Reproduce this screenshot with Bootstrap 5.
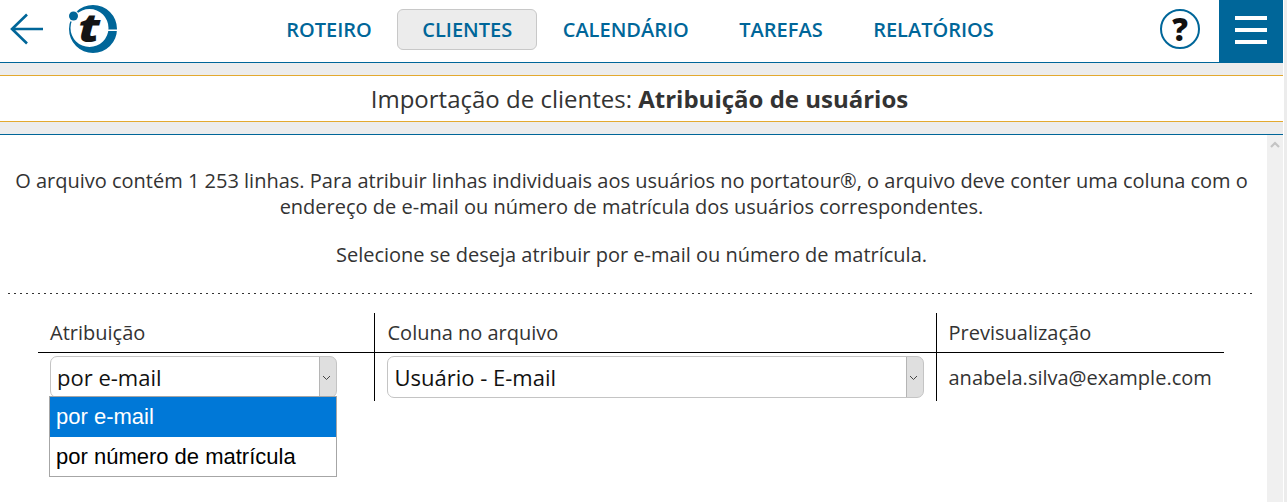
<!DOCTYPE html>
<html lang="pt-BR">
<head>
<meta charset="utf-8">
<title>Importação de clientes</title>
<link href="https://cdn.jsdelivr.net/npm/bootstrap@5.3.0/dist/css/bootstrap.min.css" rel="stylesheet">
<style>
html,body{height:502px;overflow:hidden;background:#fff}
body{font-family:"Open Sans","Noto Sans",sans-serif;font-size:20px;color:#333;line-height:26px}
.app-shell{width:1283px;height:502px;display:flex;flex-direction:column}
.top-bar{height:62px;flex:none;background:#fff}
.back-link{width:38px;margin-left:9px;display:block;line-height:0;margin-top:-4px}
.logo-mark{margin-left:22px;display:block;margin-top:-4px;line-height:0;width:48px;height:48px}
.logo-mark svg{overflow:visible}
.main-nav{flex:1;justify-content:center;padding-left:3px;margin-bottom:3px}
.nav-item-link{display:block;color:#006699;font-weight:600;font-size:20px;line-height:23px;padding:8px 24.250px;border:1px solid transparent;border-radius:6px;text-decoration:none;text-transform:uppercase}
.nav-item-link.is-current{background:#ececec;border-color:#c8c8c8}
.help-btn{width:40px;height:40px;border:2px solid #006699;border-radius:50%;display:flex;align-items:center;justify-content:center;color:#111;font-weight:800;font-size:31px;line-height:1;margin-right:19px;margin-bottom:4px;text-decoration:none}
.menu-btn{width:64px;height:62px;background:#006699;display:flex;flex-direction:column;justify-content:center;gap:7.500px;align-items:center;border:0;padding:0 0 2px}
.menu-btn i{display:block;width:32px;height:4.500px;background:#fff}
.title-band{flex:none;background:#ececec;border-top:1px solid #006699;border-bottom:1px solid #006699;padding:12px 0;height:73px}
.title-inner{background:#fff;height:47px;border-top:1px solid #e3a92f;border-bottom:1px solid #e3a92f;text-align:center;font-size:24px;line-height:45px;color:#333;padding-right:4px}
.title-inner b{font-weight:700}
.work-area{flex:1;display:flex;min-height:0}
.content-pane{flex:1;min-width:0;padding:33px 12px 0 8px}
.intro-text{text-align:center;margin:0 0 22px;line-height:26px;font-size:20px;color:#333}
.dot-rule{height:1px;margin-top:25px;background:repeating-linear-gradient(90deg,#333 0 2px,transparent 2px 6px)}
.map-table{width:1186px;margin:19px 0 0 30px;border-collapse:collapse;table-layout:fixed}
.map-table th{font-weight:400;color:#333;font-size:20px;height:39px;padding:2px 12px 0;border-bottom:1px solid #000;vertical-align:middle;line-height:26px}
.map-table td{height:48px;padding:3px 12px 3px;vertical-align:middle;font-size:20px}
.map-table td:last-child{padding-top:5px}
.map-table th+th,.map-table td+td{border-left:1px solid #000}
.map-table th:nth-child(2){padding-left:13px}
.map-table td:nth-child(2) .pick-box{padding-left:7px}
.pick-box{display:block;width:100%;height:42px;padding:0 24px 0 6px;border:1px solid #c4c4c4;border-radius:7px;color:#111;font-size:22px;font-family:"Open Sans",sans-serif;appearance:none;background-color:#fff;background-repeat:no-repeat;background-position:right center;background-size:17px 40px;background-image:url("data:image/svg+xml,%3Csvg xmlns='http://www.w3.org/2000/svg' width='17' height='40'%3E%3Crect width='17' height='40' fill='%23dfdfdf'/%3E%3Crect width='1' height='40' fill='%23b5b5b5'/%3E%3Cpath d='M4 19l3.500 3.500L11 19' fill='none' stroke='%23444' stroke-width='1'/%3E%3C/svg%3E")}
.pick-wrap{position:relative;width:287px}
.drop-list{position:absolute;left:-1px;top:40px;width:288px;background:#fff;border:1px solid #a6a6a6;font-family:"Liberation Sans",Arial,sans-serif;font-size:22px;line-height:39px;color:#000;margin:0;padding:0;list-style:none;z-index:5}
.drop-list li{padding:0 6px;height:40px}
.drop-list li+li{height:39px;line-height:40px}
.drop-list li.is-on{background:#0078d7;color:#fff}
.side-scroll{width:16px;flex:none;background:#f0f0f0;display:flex;justify-content:center;padding-top:6px}
.side-scroll svg{display:block}
.outer-scroll{position:fixed;top:0;right:0;width:3px;height:502px;background:#ececec}
</style>
</head>
<body>
<div class="app-shell">
  <header class="top-bar d-flex align-items-center">
    <a class="back-link" href="#" aria-label="Voltar">
      <svg width="36" height="32" viewBox="0 0 36 32"><path d="M34 16H3M18 1.500 3 16 18 30.500" fill="none" stroke="#006699" stroke-width="2.600"/></svg>
    </a>
    <a class="logo-mark" href="#" aria-label="portatour">
      <svg width="48" height="48" viewBox="0 0 48 48">
        <path fill-rule="evenodd" d="M24 0a24 24 0 1 1 0 48a24 24 0 1 1 0-48ZM20.500 4a19 19 0 1 0 0 38a19 19 0 1 0 0-38Z" fill="#006699"/>
        <rect x="38" y="24.500" width="10" height="1.500" fill="#fff"/>
        <circle cx="4" cy="11" r="6" fill="#fff"/>
        <circle cx="4.500" cy="11" r="4.500" fill="#006699"/>
        <text transform="translate(9.500 37) scale(1.250 1)" font-family="Open Sans, sans-serif" font-weight="800" font-style="italic" font-size="38" fill="#141414">t</text>
      </svg>
    </a>
    <nav class="main-nav d-flex align-items-center">
      <a class="nav-item-link" href="#">Roteiro</a>
      <a class="nav-item-link is-current" href="#">Clientes</a>
      <a class="nav-item-link" href="#">Calendário</a>
      <a class="nav-item-link" href="#">Tarefas</a>
      <a class="nav-item-link" href="#">Relatórios</a>
    </nav>
    <a class="help-btn" href="#" aria-label="Ajuda">?</a>
    <button class="menu-btn" type="button" aria-label="Menu"><i></i><i></i><i></i></button>
  </header>
  <div class="title-band">
    <div class="title-inner">Importação de clientes: <b>Atribuição de usuários</b></div>
  </div>
  <div class="work-area">
    <main class="content-pane">
      <p class="intro-text">O arquivo contém 1 253 linhas. Para atribuir linhas individuais aos usuários no portatour®, o arquivo deve conter uma coluna com o endereço de e-mail ou número de matrícula dos usuários correspondentes.</p>
      <p class="intro-text mb-0">Selecione se deseja atribuir por e-mail ou número de matrícula.</p>
      <div class="dot-rule"></div>
      <table class="map-table">
        <colgroup><col style="width:336px"><col style="width:562px"><col style="width:288px"></colgroup>
        <thead><tr><th>Atribuição</th><th>Coluna no arquivo</th><th>Previsualização</th></tr></thead>
        <tbody><tr>
          <td><div class="pick-wrap">
            <select class="pick-box" aria-label="Atribuição"><option>por e-mail</option><option>por número de matrícula</option></select>
            <ul class="drop-list"><li class="is-on">por e-mail</li><li>por número de matrícula</li></ul>
          </div></td>
          <td><select class="pick-box" aria-label="Coluna"><option>Usuário - E-mail</option></select></td>
          <td>anabela.silva@example.com</td>
        </tr></tbody>
      </table>
    </main>
    <div class="side-scroll">
      <svg width="10" height="7" viewBox="0 0 10 7"><path d="M1 6l4-4 4 4" fill="none" stroke="#c4c4c4" stroke-width="2.200"/></svg>
    </div>
  </div>
</div>
<div class="outer-scroll"></div>
<script src="https://cdn.jsdelivr.net/npm/bootstrap@5.3.0/dist/js/bootstrap.bundle.min.js"></script>
</body>
</html>
